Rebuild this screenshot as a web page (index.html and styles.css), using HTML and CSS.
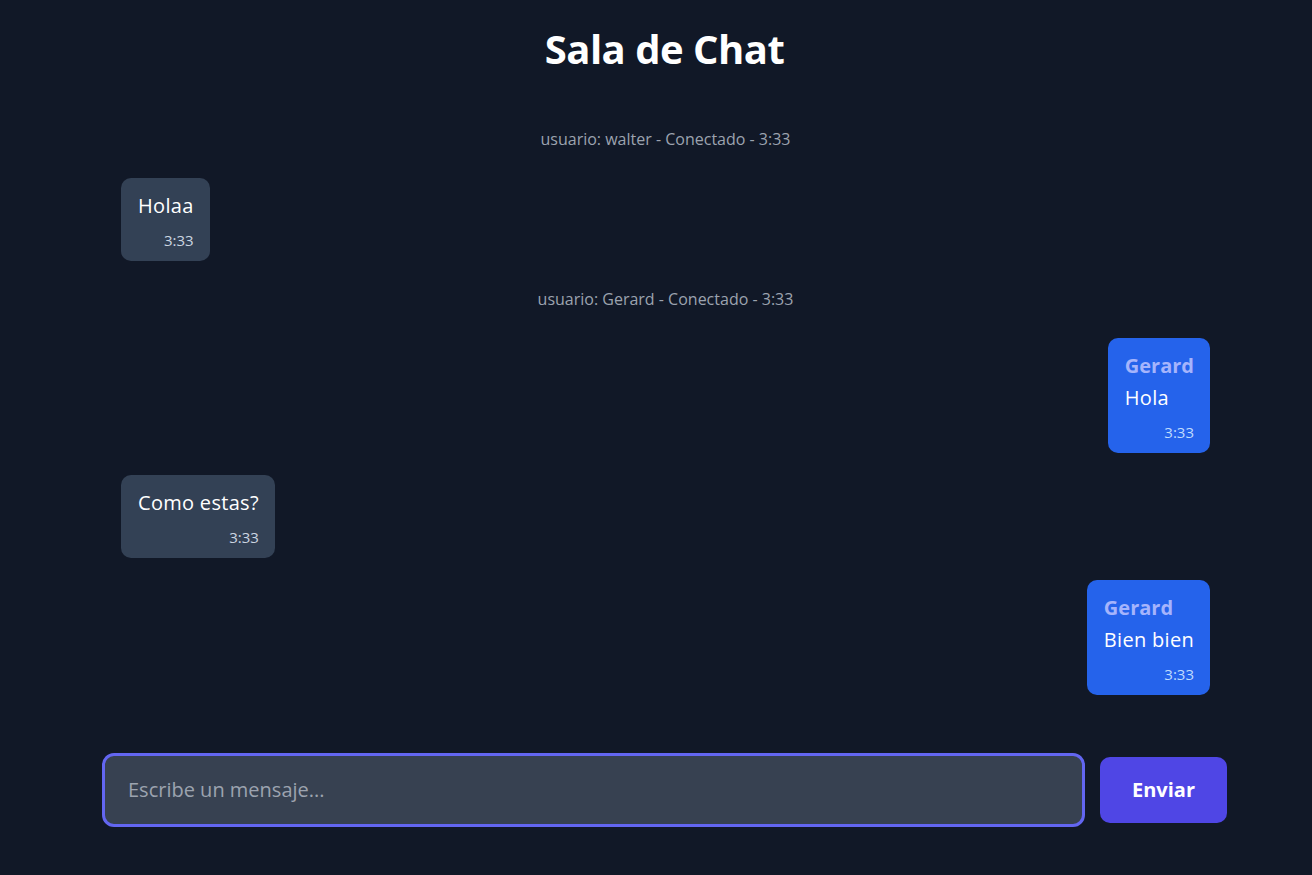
FILE: index.html
```html
<!DOCTYPE html>
<html lang="es">
<head>
  <meta charset="UTF-8">
  <meta name="viewport" content="width=device-width, initial-scale=1.0">
  <title>Sala de Chat</title>
  <link rel="stylesheet" href="styles.css">
</head>
<body>
  <div class="chat">
    <h1 class="chat-title">Sala de Chat</h1>

    <div class="messages">
      <div class="system">usuario: walter - Conectado - 3:33</div>

      <div class="msg msg-other">
        <div class="msg-text">Holaa</div>
        <div class="msg-time">3:33</div>
      </div>

      <div class="system">usuario: Gerard - Conectado - 3:33</div>

      <div class="msg msg-own">
        <div class="msg-user">Gerard</div>
        <div class="msg-text">Hola</div>
        <div class="msg-time">3:33</div>
      </div>

      <div class="msg msg-other">
        <div class="msg-text">Como estas?</div>
        <div class="msg-time">3:33</div>
      </div>

      <div class="msg msg-own">
        <div class="msg-user">Gerard</div>
        <div class="msg-text">Bien bien</div>
        <div class="msg-time">3:33</div>
      </div>
    </div>

    <form class="composer" onsubmit="return false">
      <input type="text" class="composer-input" placeholder="Escribe un mensaje...">
      <button type="submit" class="composer-btn">Enviar</button>
    </form>
  </div>
</body>
</html>
```

FILE: styles.css
```css
body {
  margin: 0;
  font-family: 'Open Sans', 'Noto Sans', sans-serif;
  background-color: #111827;
  color: #fff;
}
.chat {
  width: 1125px;
  margin-left: 102px;
  padding-top: 25px;
}
.chat-title {
  margin: 0;
  text-align: center;
  font-size: 40px;
  line-height: 48px;
  font-weight: 700;
  letter-spacing: -0.5px;
}
.messages {
  display: flex;
  flex-direction: column;
  gap: 22px;
  margin-top: 49.5px;
  padding: 0 17px 0 19px;
}
.system {
  text-align: center;
  font-size: 16px;
  line-height: 25px;
  padding: 4px 0;
  color: #9ca3af;
}
.msg {
  padding: 14px 16px 11px 17px;
  border-radius: 10px;
  max-width: 60%;
}
.msg-other {
  align-self: flex-start;
  background: #334155;
}
.msg-own {
  align-self: flex-end;
  background: #2563eb;
}
.msg-user {
  font-size: 20px;
  line-height: 28px;
  font-weight: 700;
  color: #a5b4fc;
  margin-bottom: 4px;
}
.msg-text {
  font-size: 20px;
  line-height: 28px;
  letter-spacing: 0.3px;
}
.msg-time {
  margin-top: 10px;
  text-align: right;
  font-size: 15px;
  line-height: 20px;
  color: #cbd5e1;
}
.msg-own .msg-time {
  color: #bfdbfe;
}
.composer {
  display: flex;
  align-items: center;
  gap: 15px;
  margin-top: 58px;
}
.composer-input {
  flex: 1;
  height: 74px;
  box-sizing: border-box;
  padding: 0 23px;
  border: 3px solid #6366f1;
  border-radius: 12px;
  background: #374151;
  color: #fff;
  font-family: inherit;
  font-size: 20px;
  outline: none;
}
.composer-input::placeholder {
  color: #9ca3af;
}
.composer-btn {
  width: 127px;
  height: 66px;
  border: none;
  border-radius: 10px;
  background: #4f46e5;
  color: #fff;
  font-family: inherit;
  font-size: 20px;
  font-weight: 700;
  cursor: pointer;
}
```
